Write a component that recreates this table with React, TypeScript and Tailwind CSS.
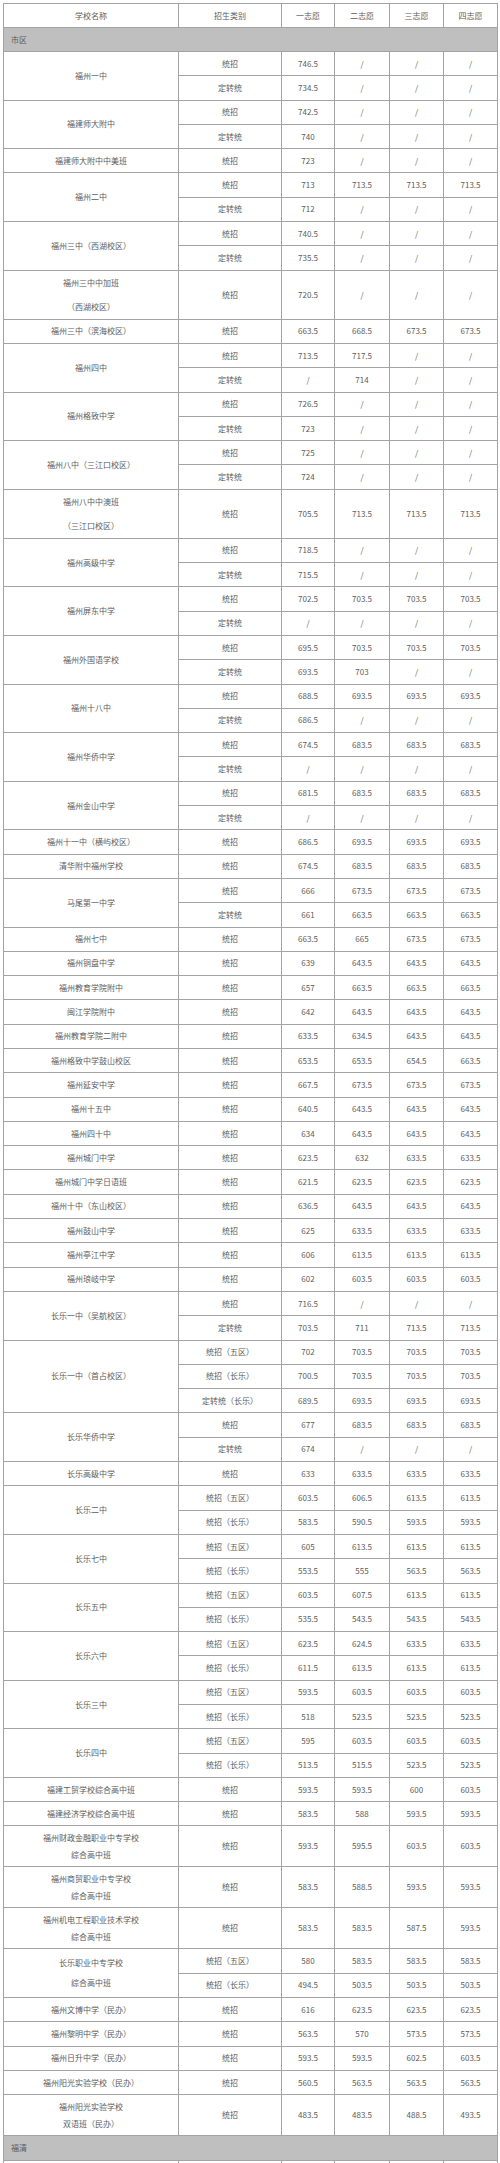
import React from 'react'

type Row = [string, string, string, string, string]
type School = { name: string[]; rows: Row[]; tall?: 'wide' | 'narrow'; gap?: boolean }

const S = '/'

const city: School[] = [
  { name: ['福州一中'], rows: [['统招', '746.5', S, S, S], ['定转统', '734.5', S, S, S]] },
  { name: ['福建师大附中'], rows: [['统招', '742.5', S, S, S], ['定转统', '740', S, S, S]] },
  { name: ['福建师大附中中美班'], rows: [['统招', '723', S, S, S]] },
  { name: ['福州二中'], rows: [['统招', '713', '713.5', '713.5', '713.5'], ['定转统', '712', S, S, S]] },
  { name: ['福州三中（西湖校区）'], rows: [['统招', '740.5', S, S, S], ['定转统', '735.5', S, S, S]] },
  { name: ['福州三中中加班', '（西湖校区）'], rows: [['统招', '720.5', S, S, S]], tall: 'wide' },
  { name: ['福州三中（滨海校区）'], rows: [['统招', '663.5', '668.5', '673.5', '673.5']] },
  { name: ['福州四中'], rows: [['统招', '713.5', '717.5', S, S], ['定转统', S, '714', S, S]] },
  { name: ['福州格致中学'], rows: [['统招', '726.5', S, S, S], ['定转统', '723', S, S, S]] },
  { name: ['福州八中（三江口校区）'], rows: [['统招', '725', S, S, S], ['定转统', '724', S, S, S]] },
  { name: ['福州八中中澳班', '（三江口校区）'], rows: [['统招', '705.5', '713.5', '713.5', '713.5']], tall: 'wide' },
  { name: ['福州高级中学'], rows: [['统招', '718.5', S, S, S], ['定转统', '715.5', S, S, S]] },
  { name: ['福州屏东中学'], rows: [['统招', '702.5', '703.5', '703.5', '703.5'], ['定转统', S, S, S, S]] },
  { name: ['福州外国语学校'], rows: [['统招', '695.5', '703.5', '703.5', '703.5'], ['定转统', '693.5', '703', S, S]] },
  { name: ['福州十八中'], rows: [['统招', '688.5', '693.5', '693.5', '693.5'], ['定转统', '686.5', S, S, S]] },
  { name: ['福州华侨中学'], rows: [['统招', '674.5', '683.5', '683.5', '683.5'], ['定转统', S, S, S, S]] },
  { name: ['福州金山中学'], rows: [['统招', '681.5', '683.5', '683.5', '683.5'], ['定转统', S, S, S, S]] },
  { name: ['福州十一中（横屿校区）'], rows: [['统招', '686.5', '693.5', '693.5', '693.5']] },
  { name: ['清华附中福州学校'], rows: [['统招', '674.5', '683.5', '683.5', '683.5']] },
  { name: ['马尾第一中学'], rows: [['统招', '666', '673.5', '673.5', '673.5'], ['定转统', '661', '663.5', '663.5', '663.5']] },
  { name: ['福州七中'], rows: [['统招', '663.5', '665', '673.5', '673.5']] },
  { name: ['福州铜盘中学'], rows: [['统招', '639', '643.5', '643.5', '643.5']] },
  { name: ['福州教育学院附中'], rows: [['统招', '657', '663.5', '663.5', '663.5']] },
  { name: ['闽江学院附中'], rows: [['统招', '642', '643.5', '643.5', '643.5']] },
  { name: ['福州教育学院二附中'], rows: [['统招', '633.5', '634.5', '643.5', '643.5']] },
  { name: ['福州格致中学鼓山校区'], rows: [['统招', '653.5', '653.5', '654.5', '663.5']] },
  { name: ['福州延安中学'], rows: [['统招', '667.5', '673.5', '673.5', '673.5']] },
  { name: ['福州十五中'], rows: [['统招', '640.5', '643.5', '643.5', '643.5']] },
  { name: ['福州四十中'], rows: [['统招', '634', '643.5', '643.5', '643.5']] },
  { name: ['福州城门中学'], rows: [['统招', '623.5', '632', '633.5', '633.5']] },
  { name: ['福州城门中学日语班'], rows: [['统招', '621.5', '623.5', '623.5', '623.5']] },
  { name: ['福州十中（东山校区）'], rows: [['统招', '636.5', '643.5', '643.5', '643.5']] },
  { name: ['福州鼓山中学'], rows: [['统招', '625', '633.5', '633.5', '633.5']] },
  { name: ['福州亭江中学'], rows: [['统招', '606', '613.5', '613.5', '613.5']] },
  { name: ['福州琅岐中学'], rows: [['统招', '602', '603.5', '603.5', '603.5']] },
  { name: ['长乐一中（吴航校区）'], rows: [['统招', '716.5', S, S, S], ['定转统', '703.5', '711', '713.5', '713.5']] },
  {
    name: ['长乐一中（首占校区）'],
    rows: [
      ['统招（五区）', '702', '703.5', '703.5', '703.5'],
      ['统招（长乐）', '700.5', '703.5', '703.5', '703.5'],
      ['定转统（长乐）', '689.5', '693.5', '693.5', '693.5'],
    ],
  },
  { name: ['长乐华侨中学'], rows: [['统招', '677', '683.5', '683.5', '683.5'], ['定转统', '674', S, S, S]] },
  { name: ['长乐高级中学'], rows: [['统招', '633', '633.5', '633.5', '633.5']] },
  { name: ['长乐二中'], rows: [['统招（五区）', '603.5', '606.5', '613.5', '613.5'], ['统招（长乐）', '583.5', '590.5', '593.5', '593.5']] },
  { name: ['长乐七中'], rows: [['统招（五区）', '605', '613.5', '613.5', '613.5'], ['统招（长乐）', '553.5', '555', '563.5', '563.5']] },
  { name: ['长乐五中'], rows: [['统招（五区）', '603.5', '607.5', '613.5', '613.5'], ['统招（长乐）', '535.5', '543.5', '543.5', '543.5']] },
  { name: ['长乐六中'], rows: [['统招（五区）', '623.5', '624.5', '633.5', '633.5'], ['统招（长乐）', '611.5', '613.5', '613.5', '613.5']] },
  { name: ['长乐三中'], rows: [['统招（五区）', '593.5', '603.5', '603.5', '603.5'], ['统招（长乐）', '518', '523.5', '523.5', '523.5']] },
  { name: ['长乐四中'], rows: [['统招（五区）', '595', '603.5', '603.5', '603.5'], ['统招（长乐）', '513.5', '515.5', '523.5', '523.5']] },
  { name: ['福建工贸学校综合高中班'], rows: [['统招', '593.5', '593.5', '600', '603.5']] },
  { name: ['福建经济学校综合高中班'], rows: [['统招', '583.5', '588', '593.5', '593.5']] },
  { name: ['福州财政金融职业中专学校', '综合高中班'], rows: [['统招', '593.5', '595.5', '603.5', '603.5']], tall: 'narrow' },
  { name: ['福州商贸职业中专学校', '综合高中班'], rows: [['统招', '583.5', '588.5', '593.5', '593.5']], tall: 'narrow' },
  { name: ['福州机电工程职业技术学校', '综合高中班'], rows: [['统招', '583.5', '583.5', '587.5', '593.5']], tall: 'narrow' },
  {
    name: ['长乐职业中专学校', '综合高中班'],
    rows: [['统招（五区）', '580', '583.5', '583.5', '583.5'], ['统招（长乐）', '494.5', '503.5', '503.5', '503.5']],
    gap: true,
  },
  { name: ['福州文博中学（民办）'], rows: [['统招', '616', '623.5', '623.5', '623.5']] },
  { name: ['福州黎明中学（民办）'], rows: [['统招', '563.5', '570', '573.5', '573.5']] },
  { name: ['福州日升中学（民办）'], rows: [['统招', '593.5', '593.5', '602.5', '603.5']] },
  { name: ['福州阳光实验学校（民办）'], rows: [['统招', '560.5', '563.5', '563.5', '563.5']] },
  { name: ['福州阳光实验学校', '双语班（民办）'], rows: [['统招', '483.5', '483.5', '488.5', '493.5']], tall: 'narrow' },
]

const cell = 'border border-[#a3a3a3] p-0 font-normal'

function SchoolRows({ school }: { school: School }) {
  const rowH = school.tall === 'wide' ? 'h-[48px]' : school.tall === 'narrow' ? 'h-[41px]' : 'h-[24.3px]'
  const lead = school.tall === 'wide' ? 'leading-[24px]' : school.tall === 'narrow' ? 'leading-[17px]' : school.gap ? 'leading-[20px]' : 'leading-[12px]'
  return (
    <>
      {school.rows.map((r, i) => (
        <tr key={i} className={rowH}>
          {i === 0 && (
            <td rowSpan={school.rows.length} className={cell}>
              {school.name.map((line) => (
                <div key={line} className={lead}>
                  {line}
                </div>
              ))}
            </td>
          )}
          {r.map((v, j) => (
            <td key={j} className={cell}>
              {v}
            </td>
          ))}
        </tr>
      ))}
    </>
  )
}

export default function App() {
  return (
    <div className="bg-white pt-[3px] pl-[3px]">
      <table className="w-[494px] table-fixed border-collapse border border-[#b5b5b5] text-center text-[8px] leading-[12px] text-[#5c5c5c] font-['Noto_Sans_CJK_SC','Noto_Sans',sans-serif]">
        <colgroup>
          <col className="w-[175px]" />
          <col className="w-[103px]" />
          <col className="w-[53px]" />
          <col className="w-[55px]" />
          <col className="w-[54px]" />
          <col className="w-[54px]" />
        </colgroup>
        <thead>
          <tr className="h-[24px]">
            <th className={cell}>学校名称</th>
            <th className={cell}>招生类别</th>
            <th className={cell}>一志愿</th>
            <th className={cell}>二志愿</th>
            <th className={cell}>三志愿</th>
            <th className={cell}>四志愿</th>
          </tr>
        </thead>
        <tbody>
          <tr className="h-[24px]">
            <td colSpan={6} className={`${cell} bg-[#bfbfbf] pl-[7px] text-left`}>
              市区
            </td>
          </tr>
          {city.map((s) => (
            <SchoolRows key={s.name.join('')} school={s} />
          ))}
          <tr className="h-[25px]">
            <td colSpan={6} className={`${cell} bg-[#bfbfbf] pl-[7px] text-left`}>
              福清
            </td>
          </tr>
          <tr className="h-[24.3px]">
            <td className={cell}></td>
            <td className={cell}></td>
            <td className={cell}></td>
            <td className={cell}></td>
            <td className={cell}></td>
            <td className={cell}></td>
          </tr>
        </tbody>
      </table>
    </div>
  )
}
